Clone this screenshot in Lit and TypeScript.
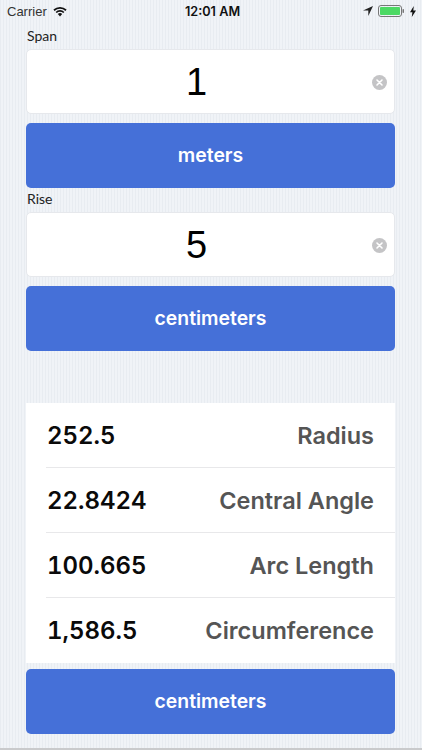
import { LitElement, html, css } from "lit";
import { customElement } from "lit/decorators.js";

const clearIcon = html`<svg class="clear" viewBox="0 0 15 15" aria-hidden="true">
  <circle cx="7.5" cy="7.5" r="7.5" fill="#c4c4c6"></circle>
  <path d="M5 5l5 5M10 5l-5 5" stroke="#fff" stroke-width="1.6" stroke-linecap="round"></path>
</svg>`;

const rows: [string, string][] = [
  ["252.5", "Radius"],
  ["22.8424", "Central Angle"],
  ["100.665", "Arc Length"],
  ["1,586.5", "Circumference"],
];

@customElement("app-root")
export class AppRoot extends LitElement {
  static styles = css`
    :host {
      display: block;
      width: 422px;
      height: 750px;
      overflow: hidden;
      box-sizing: border-box;
      font-family: "Liberation Sans", Arial, sans-serif;
      background-color: #eef1f5;
      background-image: repeating-linear-gradient(90deg, #e8ecf1 0 1px, #f0f3f7 1px 3px);
      border-bottom: 2px solid #c9cacc;
    }
    .status {
      height: 28px;
      display: grid;
      grid-template-columns: 1fr auto 1fr;
      align-items: center;
      padding: 0 6px 6px 7px;
      box-sizing: border-box;
      font-size: 13px;
      color: #111;
    }
    .status-left { display: flex; align-items: center; gap: 6px; color: #333; }
    .time { font-family: "Inter", "Liberation Sans", sans-serif; font-weight: 600; font-size: 12.7px; padding-left: 2px; }
    .status-right { display: flex; align-items: center; justify-content: flex-end; gap: 5px; }
    .main { padding: 0 27px 0 26px; display: flex; flex-direction: column; }
    .label {
      font-family: "Lato", sans-serif;
      font-size: 14px;
      line-height: 16px;
      color: #222;
      height: 22px;
      margin-bottom: -1px;
      padding-left: 1px;
    }
    .label.rise { margin-top: 3px; height: 21px; margin-bottom: 0; }
    .field {
      height: 65px;
      background: #fff;
      border-radius: 5px;
      border: 1px solid #e6e8ec;
      box-sizing: border-box;
      display: flex;
      align-items: center;
      justify-content: center;
      padding: 2px 28px 0 0;
      position: relative;
      font-size: 38px;
      color: #000;
    }
    .clear { position: absolute; right: 7px; top: 25px; width: 15px; height: 15px; }
    .btn {
      height: 65px;
      background: #4570d8;
      border-radius: 5px;
      color: #fff;
      display: flex;
      align-items: center;
      justify-content: center;
      font-family: "Inter", "Liberation Sans", sans-serif;
      font-weight: 600;
      font-size: 19.4px;
      padding-bottom: 1px;
      box-sizing: border-box;
      margin-top: 9px;
    }
    .list {
      margin-top: 52px;
      background: #fff;
      height: 260px;
      padding-left: 20px;
      box-sizing: border-box;
    }
    .row {
      height: 65px;
      box-sizing: border-box;
      display: flex;
      align-items: center;
      justify-content: space-between;
      padding-right: 21px;
      border-bottom: 1px solid #e8e8ea;
    }
    .row:last-child { border-bottom: none; }
    .value {
      font-family: "Inter", "Liberation Sans", sans-serif;
      font-weight: 600;
      font-size: 24px;
      font-variant-numeric: tabular-nums;
      color: #0a0a0a;
      padding-left: 1px;
    }
    .name { font-family: "Inter", "Liberation Sans", sans-serif; font-weight: 600; font-size: 23.5px; color: #555; }
    .btn.last { margin-top: 6px; }
  `;

  render() {
    return html`
      <div class="status">
        <div class="status-left">
          <span>Carrier</span>
          <svg width="14" height="11" viewBox="0 0 14 11" aria-hidden="true">
            <path d="M0.4 3.6a9.4 9.4 0 0 1 13.2 0l-1.2 1.3a7.7 7.7 0 0 0-10.8 0z" fill="#111"></path>
            <path d="M2.6 5.9a6.3 6.3 0 0 1 8.8 0l-1.2 1.2a4.6 4.6 0 0 0-6.4 0z" fill="#111"></path>
            <path d="M4.8 8.1a3.1 3.1 0 0 1 4.4 0L7 10.4z" fill="#111"></path>
          </svg>
        </div>
        <span class="time">12:01 AM</span>
        <div class="status-right">
          <svg width="10" height="10" viewBox="0 0 10 10" aria-hidden="true">
            <path d="M10 0L0 4.4h5.3V10z" fill="#222"></path>
          </svg>
          <svg width="27" height="12" viewBox="0 0 27 12" aria-hidden="true">
            <rect x="0.5" y="0.5" width="23" height="11" rx="2.5" fill="none" stroke="#777"></rect>
            <rect x="2" y="2" width="20" height="8" rx="1" fill="#4cd964"></rect>
            <rect x="24.5" y="4" width="1.5" height="4" rx="0.7" fill="#777"></rect>
          </svg>
          <svg width="6" height="11" viewBox="0 0 6 11" aria-hidden="true">
            <path d="M3.8 0L0 6.2h2.4L1.8 11 6 4.4H3.3z" fill="#111"></path>
          </svg>
        </div>
      </div>
      <div class="main">
        <div class="label">Span</div>
        <div class="field">1 ${clearIcon}</div>
        <div class="btn">meters</div>
        <div class="label rise">Rise</div>
        <div class="field">5 ${clearIcon}</div>
        <div class="btn">centimeters</div>
        <div class="list">
          ${rows.map(
            ([v, n]) => html`<div class="row"><span class="value">${v}</span><span class="name">${n}</span></div>`
          )}
        </div>
        <div class="btn last">centimeters</div>
      </div>
    `;
  }
}
